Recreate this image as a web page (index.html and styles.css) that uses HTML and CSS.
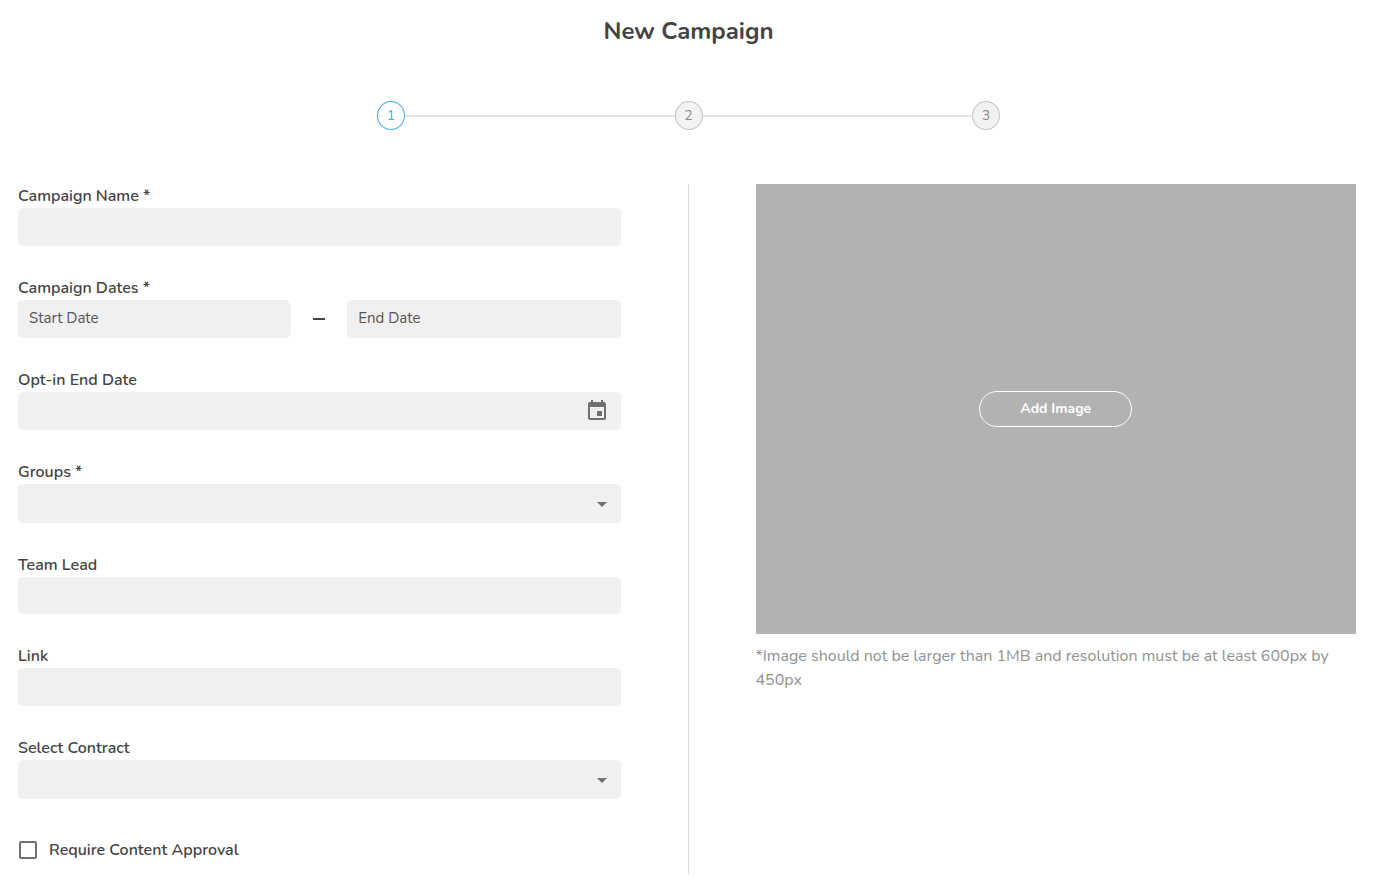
FILE: index.html
```html
<!DOCTYPE html>
<html lang="en">
<head>
  <meta charset="UTF-8" />
  <meta name="viewport" content="width=device-width, initial-scale=1" />
  <title>New Campaign</title>
  <link rel="stylesheet" href="styles.css">
</head>
<body>
  <h1>New Campaign</h1>

  <ol class="stepper">
    <li class="step active">1</li>
    <li class="line" aria-hidden="true"></li>
    <li class="step">2</li>
    <li class="line" aria-hidden="true"></li>
    <li class="step">3</li>
  </ol>

  <form class="campaign">
    <div class="details">
      <div class="field">
        <label for="name">Campaign Name *</label>
        <input type="text" id="name" class="control" />
      </div>

      <div class="field">
        <label for="start-date">Campaign Dates *</label>
        <div class="dates">
          <input type="text" id="start-date" class="control" placeholder="Start Date" />
          <span class="dash"></span>
          <input type="text" id="end-date" class="control" placeholder="End Date" aria-label="End Date" />
        </div>
      </div>

      <div class="field">
        <label for="opt-in">Opt-in End Date</label>
        <div class="with-icon">
          <input type="text" id="opt-in" class="control" />
          <button type="button" class="icon calendar" aria-label="Choose date">
            <svg viewBox="0 0 24 24"><path d="M17 12h-5v5h5v-5zM16 1v2H8V1H6v2H5c-1.11 0-1.99.9-1.99 2L3 19c0 1.1.89 2 2 2h14c1.1 0 2-.9 2-2V5c0-1.1-.9-2-2-2h-1V1h-2zm3 18H5V8h14v11z"/></svg>
          </button>
        </div>
      </div>

      <div class="field">
        <label for="groups">Groups *</label>
        <div class="with-icon">
          <select id="groups" class="control"><option value=""></option></select>
          <svg class="icon arrow" viewBox="0 0 24 24"><path d="M7 10l5 5 5-5z"/></svg>
        </div>
      </div>

      <div class="field">
        <label for="team-lead">Team Lead</label>
        <input type="text" id="team-lead" class="control compact" />
      </div>

      <div class="field">
        <label for="link">Link</label>
        <input type="text" id="link" class="control" />
      </div>

      <div class="field">
        <label for="contract">Select Contract</label>
        <div class="with-icon">
          <select id="contract" class="control"><option value=""></option></select>
          <svg class="icon arrow" viewBox="0 0 24 24"><path d="M7 10l5 5 5-5z"/></svg>
        </div>
      </div>

      <div class="approval">
        <input type="checkbox" id="approval" />
        <label for="approval">Require Content Approval</label>
      </div>
    </div>

    <div class="media">
      <div class="image-box">
        <button type="button" class="add-image">Add Image</button>
      </div>
      <p class="hint">*Image should not be larger than 1MB and resolution must be at least 600px by 450px</p>
    </div>
  </form>
</body>
</html>
```
FILE: styles.css
```css
* {
  box-sizing: border-box;
}

body {
  margin: 0;
  font-family: Nunito, Lato, sans-serif;
  font-size: 16px;
  line-height: 24px;
  color: #444;
  background: #fff;
}

h1 {
  margin: 0;
  padding-top: 15px;
  font-size: 24px;
  line-height: 32px;
  font-weight: bold;
  text-align: center;
}

/* stepper */
.stepper {
  display: flex;
  align-items: center;
  width: 90%;
  max-width: 623px;
  margin: 54px auto;
  padding: 0;
  list-style: none;
}

.step {
  display: flex;
  align-items: center;
  justify-content: center;
  width: 28px;
  height: 29px;
  border: 1px solid #c4c4c4;
  border-radius: 50%;
  background: #f2f2f2;
  color: #8c8c8c;
  font-size: 14px;
}

.step.active {
  border-color: #45a9f5;
  background: #fff;
  color: #45a9f5;
}

.line {
  flex: 1;
  height: 2px;
  background: #e5e5ea;
}

/* form */
.campaign {
  display: grid;
  grid-template-columns: 1fr 1fr;
}

.details {
  padding: 0 67px 3px 18px;
  border-right: 1px solid #dcdcdc;
}

.media {
  padding: 0 21px 0 67px;
}

.field {
  margin-bottom: 30px;
}

label {
  display: block;
  font-weight: 600;
}

.control {
  display: block;
  width: 100%;
  height: 38px;
  padding: 0 11px 2px;
  border: none;
  border-radius: 5px;
  background: #f0f0f0;
  color: #444;
  font-family: inherit;
  font-size: 15px;
}

.control.compact {
  height: 37px;
}

select.control {
  height: 39px;
  appearance: none;
}

.control::placeholder {
  color: #555;
  opacity: 1;
}

.dates {
  display: flex;
  align-items: center;
}

.dates .control {
  flex: 1;
  min-width: 0;
}

.dash {
  width: 12px;
  height: 2px;
  margin: 0 22px;
  background: #444;
}

.with-icon {
  position: relative;
  display: flex;
  align-items: center;
}

.icon {
  position: absolute;
  width: 24px;
  height: 24px;
  padding: 0;
  border: none;
  background: none;
  fill: #707070;
}

.icon svg {
  display: block;
}

.calendar {
  right: 12px;
  cursor: pointer;
}

.arrow {
  right: 7px;
  pointer-events: none;
}

.approval {
  display: flex;
  align-items: center;
  gap: 12px;
  height: 42px;
}

.approval input {
  appearance: none;
  width: 18px;
  height: 18px;
  margin: 0 0 0 1px;
  border: 2px solid #707070;
  border-radius: 2px;
}

.approval input:checked {
  background: #45a9f5;
  border-color: #45a9f5;
}

/* image upload */
.image-box {
  display: flex;
  align-items: center;
  justify-content: center;
  aspect-ratio: 4 / 3;
  background: #b2b2b2;
}

.add-image {
  padding: 5px 40px;
  border: 1px solid #fff;
  border-radius: 18px;
  background: transparent;
  color: #fff;
  font-family: inherit;
  font-size: 14px;
  line-height: 24px;
  font-weight: bold;
  cursor: pointer;
}

.hint {
  margin: 10px 0 0;
  color: #919191;
}
```
